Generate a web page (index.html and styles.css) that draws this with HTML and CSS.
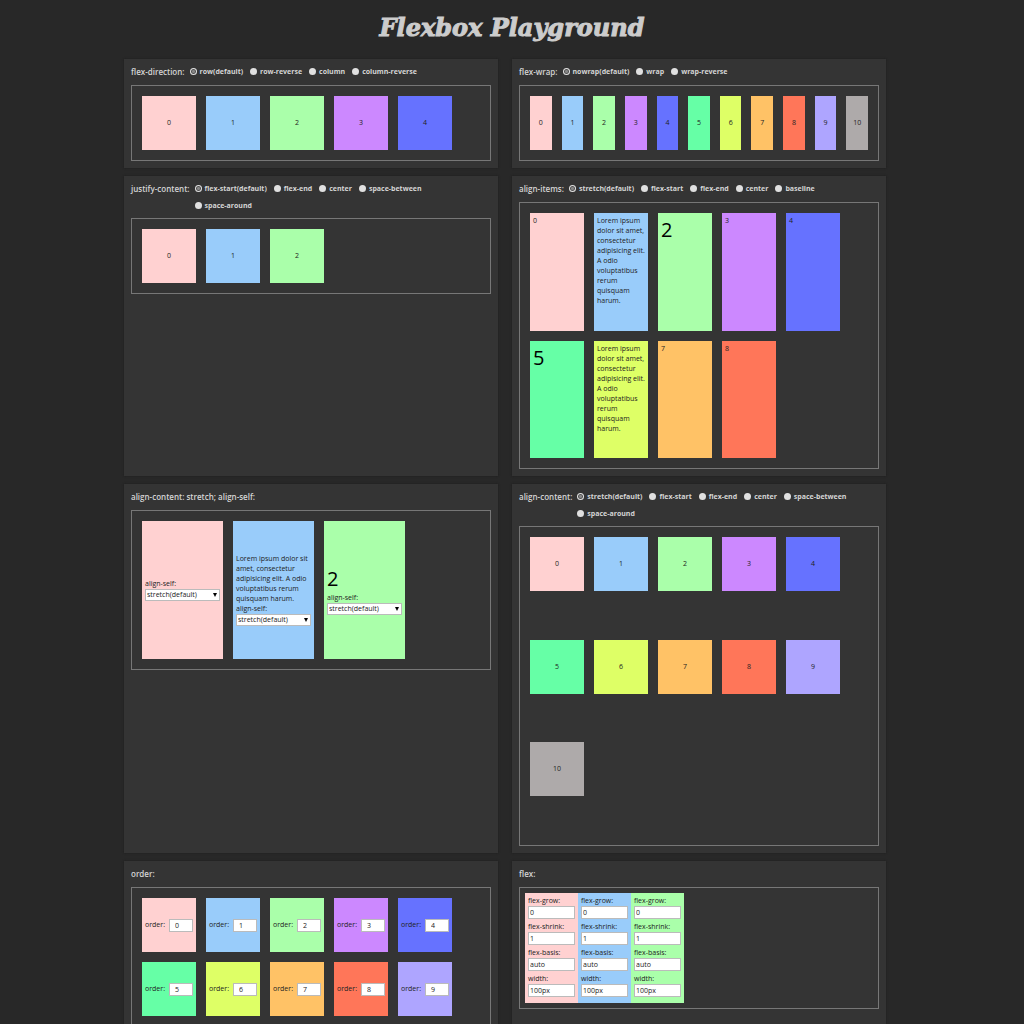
FILE: index.html
```html
<!DOCTYPE html>
<html lang="en">
<head>
<meta charset="utf-8">
<meta name="viewport" content="width=device-width, initial-scale=1">
<title>Flexbox Playground</title>
<link rel="stylesheet" href="styles.css">
</head>
<body>
<h1 class="page-title">Flexbox Playground</h1>
<main class="playground">

  <section class="panel">
    <div class="panel-head">
      <h2 class="prop" id="p-direction">flex-direction:</h2>
      <div class="options" role="radiogroup" aria-labelledby="p-direction">
        <label class="option"><input type="radio" name="direction" checked>row(default)</label>
        <label class="option"><input type="radio" name="direction">row-reverse</label>
        <label class="option"><input type="radio" name="direction">column</label>
        <label class="option"><input type="radio" name="direction">column-reverse</label>
      </div>
    </div>
    <div class="demo">
      <div class="box c0">0</div><div class="box c1">1</div><div class="box c2">2</div><div class="box c3">3</div><div class="box c4">4</div>
    </div>
  </section>

  <section class="panel">
    <div class="panel-head">
      <h2 class="prop" id="p-wrap">flex-wrap:</h2>
      <div class="options" role="radiogroup" aria-labelledby="p-wrap">
        <label class="option"><input type="radio" name="wrap" checked>nowrap(default)</label>
        <label class="option"><input type="radio" name="wrap">wrap</label>
        <label class="option"><input type="radio" name="wrap">wrap-reverse</label>
      </div>
    </div>
    <div class="demo demo-nowrap">
      <div class="box c0">0</div><div class="box c1">1</div><div class="box c2">2</div><div class="box c3">3</div><div class="box c4">4</div><div class="box c5">5</div><div class="box c6">6</div><div class="box c7">7</div><div class="box c8">8</div><div class="box c9">9</div><div class="box c10">10</div>
    </div>
  </section>

  <section class="panel">
    <div class="panel-head">
      <h2 class="prop" id="p-justify">justify-content:</h2>
      <div class="options" role="radiogroup" aria-labelledby="p-justify">
        <label class="option"><input type="radio" name="justify" checked>flex-start(default)</label>
        <label class="option"><input type="radio" name="justify">flex-end</label>
        <label class="option"><input type="radio" name="justify">center</label>
        <label class="option"><input type="radio" name="justify">space-between</label>
        <label class="option"><input type="radio" name="justify">space-around</label>
      </div>
    </div>
    <div class="demo">
      <div class="box c0">0</div><div class="box c1">1</div><div class="box c2">2</div>
    </div>
  </section>

  <section class="panel">
    <div class="panel-head">
      <h2 class="prop" id="p-items">align-items:</h2>
      <div class="options" role="radiogroup" aria-labelledby="p-items">
        <label class="option"><input type="radio" name="items" checked>stretch(default)</label>
        <label class="option"><input type="radio" name="items">flex-start</label>
        <label class="option"><input type="radio" name="items">flex-end</label>
        <label class="option"><input type="radio" name="items">center</label>
        <label class="option"><input type="radio" name="items">baseline</label>
      </div>
    </div>
    <div class="demo demo-items">
      <div class="tall c0">0</div>
      <div class="tall c1">Lorem ipsum dolor sit amet, consectetur adipisicing elit. A odio voluptatibus rerum quisquam harum.</div>
      <div class="tall big c2">2</div>
      <div class="tall c3">3</div>
      <div class="tall c4">4</div>
      <div class="tall big c5">5</div>
      <div class="tall c6">Lorem ipsum dolor sit amet, consectetur adipisicing elit. A odio voluptatibus rerum quisquam harum.</div>
      <div class="tall c7">7</div>
      <div class="tall c8">8</div>
    </div>
  </section>

  <section class="panel">
    <div class="panel-head"><h2 class="prop">align-content: stretch; align-self:</h2></div>
    <div class="demo demo-self">
      <div class="self c0">
        <label for="self0">align-self:</label>
        <select id="self0"><option>stretch(default)</option></select>
      </div>
      <div class="self c1">
        <p class="text">Lorem ipsum dolor sit amet, consectetur adipisicing elit. A odio voluptatibus rerum quisquam harum.</p>
        <label for="self1">align-self:</label>
        <select id="self1"><option>stretch(default)</option></select>
      </div>
      <div class="self c2">
        <p class="text big">2</p>
        <label for="self2">align-self:</label>
        <select id="self2"><option>stretch(default)</option></select>
      </div>
    </div>
  </section>

  <section class="panel">
    <div class="panel-head">
      <h2 class="prop" id="p-content">align-content:</h2>
      <div class="options" role="radiogroup" aria-labelledby="p-content">
        <label class="option"><input type="radio" name="content" checked>stretch(default)</label>
        <label class="option"><input type="radio" name="content">flex-start</label>
        <label class="option"><input type="radio" name="content">flex-end</label>
        <label class="option"><input type="radio" name="content">center</label>
        <label class="option"><input type="radio" name="content">space-between</label>
        <label class="option"><input type="radio" name="content">space-around</label>
      </div>
    </div>
    <div class="demo demo-content">
      <div class="box c0">0</div><div class="box c1">1</div><div class="box c2">2</div><div class="box c3">3</div><div class="box c4">4</div><div class="box c5">5</div><div class="box c6">6</div><div class="box c7">7</div><div class="box c8">8</div><div class="box c9">9</div><div class="box c10">10</div>
    </div>
  </section>

  <section class="panel">
    <div class="panel-head"><h2 class="prop">order:</h2></div>
    <div class="demo demo-order">
      <label class="box order c0">order:<input type="text" value="0"></label>
      <label class="box order c1">order:<input type="text" value="1"></label>
      <label class="box order c2">order:<input type="text" value="2"></label>
      <label class="box order c3">order:<input type="text" value="3"></label>
      <label class="box order c4">order:<input type="text" value="4"></label>
      <label class="box order c5">order:<input type="text" value="5"></label>
      <label class="box order c6">order:<input type="text" value="6"></label>
      <label class="box order c7">order:<input type="text" value="7"></label>
      <label class="box order c8">order:<input type="text" value="8"></label>
      <label class="box order c9">order:<input type="text" value="9"></label>
    </div>
  </section>

  <section class="panel">
    <div class="panel-head"><h2 class="prop">flex:</h2></div>
    <div class="demo demo-flex">
      <div class="fields c0">
        <label class="field">flex-grow:<input type="text" value="0"></label>
        <label class="field">flex-shrink:<input type="text" value="1"></label>
        <label class="field">flex-basis:<input type="text" value="auto"></label>
        <label class="field">width:<input type="text" value="100px"></label>
      </div>
      <div class="fields c1">
        <label class="field">flex-grow:<input type="text" value="0"></label>
        <label class="field">flex-shrink:<input type="text" value="1"></label>
        <label class="field">flex-basis:<input type="text" value="auto"></label>
        <label class="field">width:<input type="text" value="100px"></label>
      </div>
      <div class="fields c2">
        <label class="field">flex-grow:<input type="text" value="0"></label>
        <label class="field">flex-shrink:<input type="text" value="1"></label>
        <label class="field">flex-basis:<input type="text" value="auto"></label>
        <label class="field">width:<input type="text" value="100px"></label>
      </div>
    </div>
  </section>

</main>
</body>
</html>
```
FILE: styles.css
```css
* { box-sizing: border-box; }

body {
  margin: 0;
  background: #282828;
  color: #222;
  font: 7px/10px "Open Sans", sans-serif;
}

.page-title {
  margin: 0;
  padding: 14px 0 17px;
  color: #ccc;
  font: italic 900 24px/28px "DejaVu Serif", serif;
  text-align: center;
  -webkit-text-stroke: 1px #ccc;
}

.playground {
  display: grid;
  grid-template-columns: repeat(auto-fit, minmax(320px, 1fr));
  gap: 8px 14px;
  max-width: 776px;
  margin: 0 auto;
  padding-right: 14px;
}

.panel {
  padding: 0 7px 7px;
  background: #343434;
  box-shadow: 0 0 2px #1c1c1c;
}

.panel-head {
  display: flex;
  gap: 5px;
  min-height: 26px;
  padding: 4px 0;
  color: #d4d4d4;
}

.prop {
  margin: 0;
  font-size: 8px;
  font-weight: 600;
  line-height: 17px;
  white-space: nowrap;
}

.options {
  display: flex;
  flex: 1;
  flex-wrap: wrap;
  align-content: flex-start;
  column-gap: 7px;
  padding-right: 8px;
}

.option {
  display: flex;
  align-items: center;
  gap: 3px;
  font-weight: 700;
  line-height: 17px;
}

.option input {
  appearance: none;
  width: 7px;
  height: 7px;
  margin: 0;
  border-radius: 50%;
  background: #e0e0e0;
}

.option input:checked {
  background: radial-gradient(circle, #888 0 1px, #555 2px, #e0e0e0 3px);
}

.demo {
  display: flex;
  flex-wrap: wrap;
  gap: 10px;
  padding: 10px;
  border: 1px solid #777;
}

.demo-nowrap { flex-wrap: nowrap; }
.demo-items { min-height: 267px; }
.demo-self { min-height: 160px; }
.demo-content { min-height: 320px; }
.demo-flex { gap: 0; padding: 5px; }

.demo-items,
.demo-content,
.demo-order { padding-right: 20px; }

.box {
  display: flex;
  align-items: center;
  justify-content: center;
  width: 54px;
  height: 54px;
}

.tall {
  width: 54px;
  padding: 3px;
}

.big {
  color: #000;
  font-size: 20px;
  line-height: 28px;
}

.text { margin: 0; }

.self {
  display: flex;
  flex-direction: column;
  justify-content: center;
  width: 81px;
  padding: 3px;
}

.self select {
  appearance: none;
  width: 100%;
  height: 12px;
  padding: 0 1px;
  border: 1px solid #bbb;
  border-radius: 0;
  background: #fff url("data:image/svg+xml,%3Csvg xmlns='http://www.w3.org/2000/svg' width='4' height='4'%3E%3Cpath d='M0 0h4L2 4z'/%3E%3C/svg%3E") no-repeat right 2px center;
  color: #222;
  font: inherit;
}

.order {
  justify-content: space-between;
  padding: 3px;
}

.order input,
.field input {
  height: 13px;
  margin: 0;
  padding: 0 1px;
  border: 1px solid #bbb;
  background: #fff;
  color: #222;
  font: inherit;
}

.order input {
  width: 24px;
  padding-left: 5px;
}

.fields {
  width: 53px;
  padding: 3px;
}

.field {
  display: flex;
  flex-direction: column;
  margin-bottom: 3px;
}

.field input { width: 100%; }

.c0 { background: #ffd1d1; }
.c1 { background: #99ccfa; }
.c2 { background: #aaffaa; }
.c3 { background: #cc88ff; }
.c4 { background: #6672ff; }
.c5 { background: #66ffa6; }
.c6 { background: #deff66; }
.c7 { background: #ffc266; }
.c8 { background: #ff7659; }
.c9 { background: #aea5ff; }
.c10 { background: #aeaaaa; }
```
